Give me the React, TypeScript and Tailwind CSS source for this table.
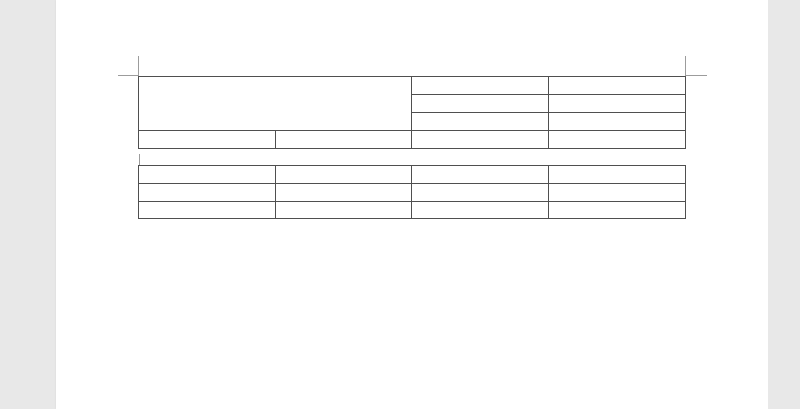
import React from "react";

const Cell = ({ className = "" }: { className?: string }) => (
  <div className={"bg-white " + className} />
);

export default function App() {
  return (
    <div className="flex w-[800px] h-[409px] bg-[#e8e8e8] overflow-hidden">
      <div className="w-[56px] shrink-0 bg-[#e8e8e8]" />
      <div className="w-[712px] shrink-0 bg-white pl-[82px] pt-[56px] shadow-[0_0_2px_rgba(0,0,0,0.08)]">
        {/* crop marks row */}
        <div className="relative w-[548px] h-[20px]">
          <div className="absolute left-0 top-0 w-px h-[20px] bg-[#9c9c9c]" />
          <div className="absolute left-[-20px] bottom-0 w-[20px] h-px bg-[#9c9c9c]" />
          <div className="absolute right-0 top-0 w-px h-[20px] bg-[#9c9c9c]" />
          <div className="absolute right-[-21px] bottom-0 w-[21px] h-px bg-[#9c9c9c]" />
        </div>
        {/* table 1 */}
        <div className="grid w-[548px] grid-cols-[136px_135px_136px_136px] grid-rows-[17px_17px_17px_17px] gap-px p-px bg-[#4f4f4f]">
          <Cell className="col-span-2 row-span-3" />
          <Cell />
          <Cell />
          <Cell />
          <Cell />
          <Cell />
          <Cell />
          <Cell />
          <Cell />
          <Cell />
          <Cell />
        </div>
        {/* paragraph mark between tables */}
        <div className="h-[16px] pt-[5px] pl-px">
          <div className="w-px h-[11px] bg-[#9c9c9c]" />
        </div>
        {/* table 2 */}
        <div className="grid w-[548px] grid-cols-[136px_135px_136px_136px] grid-rows-[17px_17px_16px] gap-px p-px bg-[#4f4f4f]">
          {Array.from({ length: 12 }).map((_, i) => (
            <Cell key={i} />
          ))}
        </div>
      </div>
      <div className="flex-1 bg-[#e8e8e8]" />
    </div>
  );
}
